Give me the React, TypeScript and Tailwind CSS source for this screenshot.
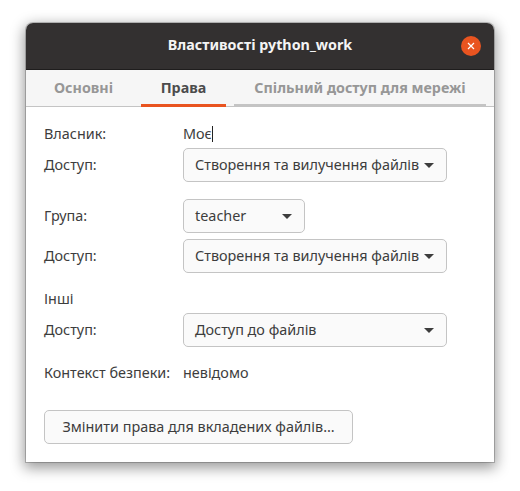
const font = { fontFamily: '"Noto Sans", sans-serif' };

function Arrow() {
  return (
    <svg width="10" height="5" viewBox="0 0 10 5" className="shrink-0">
      <path d="M0 0h10L5 5z" fill="#3d3d3d" />
    </svg>
  );
}

function Combo({ label, width }: { label: string; width: string }) {
  return (
    <div className={`flex h-[34px] items-center justify-between rounded-[5px] border border-[#c4c4c4] bg-[#fafafa] pl-[11px] pr-[12px] text-[14.4px] text-[#3d3d3d] ${width}`}>
      <span className="whitespace-nowrap pb-px">{label}</span>
      <Arrow />
    </div>
  );
}

function Row({ label, children, className }: { label: string; children: React.ReactNode; className?: string }) {
  return (
    <div className={`flex items-center ${className ?? ""}`}>
      <div className="w-[139px] shrink-0 whitespace-nowrap pb-px text-[14.4px] text-[#3d3d3d]">{label}</div>
      {children}
    </div>
  );
}

export default function App() {
  return (
    <div className="h-[491px] w-[520px] overflow-hidden bg-white pl-[26px] pt-[23px]" style={font}>
      <div className="flex h-[439px] w-[468px] flex-col rounded-t-[7px] bg-white shadow-[0_0_0_1px_rgba(0,0,0,0.2),0_4px_14px_2px_rgba(0,0,0,0.4)]">
        <header className="relative flex h-[47px] shrink-0 items-center justify-center rounded-t-[7px] border-b border-[#1f1d1d] bg-[#333030] pb-[2px]">
          <h1 className="text-[14.3px] font-bold text-[#f4f4f4]">Властивості python_work</h1>
          <button className="absolute right-[13px] top-[13px] flex h-5 w-5 items-center justify-center rounded-full bg-[#e95420]">
            <svg width="8" height="8" viewBox="0 0 8 8">
              <path d="M1 1l6 6M7 1L1 7" stroke="#fff" strokeWidth="1.2" />
            </svg>
          </button>
        </header>

        <nav className="flex h-[37px] shrink-0 items-stretch border-b border-[#c4c4c4] bg-[#f6f6f6] px-[8px] text-[14.3px] font-bold">
          <div className="flex w-[99px] items-center justify-center text-[#979797]">Основні</div>
          <div className="-mb-px ml-[8px] flex w-[85px] items-center justify-center border-b-[3px] border-[#e95420] pt-[2px] text-[#4c4c4c]">Права</div>
          <div className="-mb-px ml-[8px] flex flex-1 items-center justify-center whitespace-nowrap border-b-[3px] border-[#c4c4c4] pt-[2px] text-[#979797]">Спільний доступ для мережі</div>
        </nav>

        <main className="flex flex-1 flex-col pl-[18px] pt-[17px]">
          <Row label="Власник:" className="h-[20px]">
            <div className="flex items-center pb-px text-[14.4px] text-[#3d3d3d]">
              Моє<span className="h-[16px] w-px bg-[#222]" />
            </div>
          </Row>
          <Row label="Доступ:" className="mt-[4px]">
            <Combo label="Створення та вилучення файлів" width="w-[264px]" />
          </Row>
          <Row label="Група:" className="mt-[17px]">
            <Combo label="teacher" width="w-[122px]" />
          </Row>
          <Row label="Доступ:" className="mt-[6px]">
            <Combo label="Створення та вилучення файлів" width="w-[264px]" />
          </Row>
          <div className="mt-[16px] h-[20px] text-[14.4px] leading-[20px] text-[#3d3d3d]">Інші</div>
          <Row label="Доступ:" className="mt-[4px]">
            <Combo label="Доступ до файлів" width="w-[264px]" />
          </Row>
          <Row label="Контекст безпеки:" className="mt-[16px] h-[20px]">
            <span className="pb-px text-[14.4px] text-[#3d3d3d]">невідомо</span>
          </Row>
          <button className="mt-[27px] flex h-[34px] w-[309px] items-center justify-center whitespace-nowrap rounded-[5px] border border-[#c4c4c4] bg-[#fafafa] pb-px text-[14.4px] text-[#3d3d3d]">
            Змінити права для вкладених файлів…
          </button>
        </main>
      </div>
    </div>
  );
}
